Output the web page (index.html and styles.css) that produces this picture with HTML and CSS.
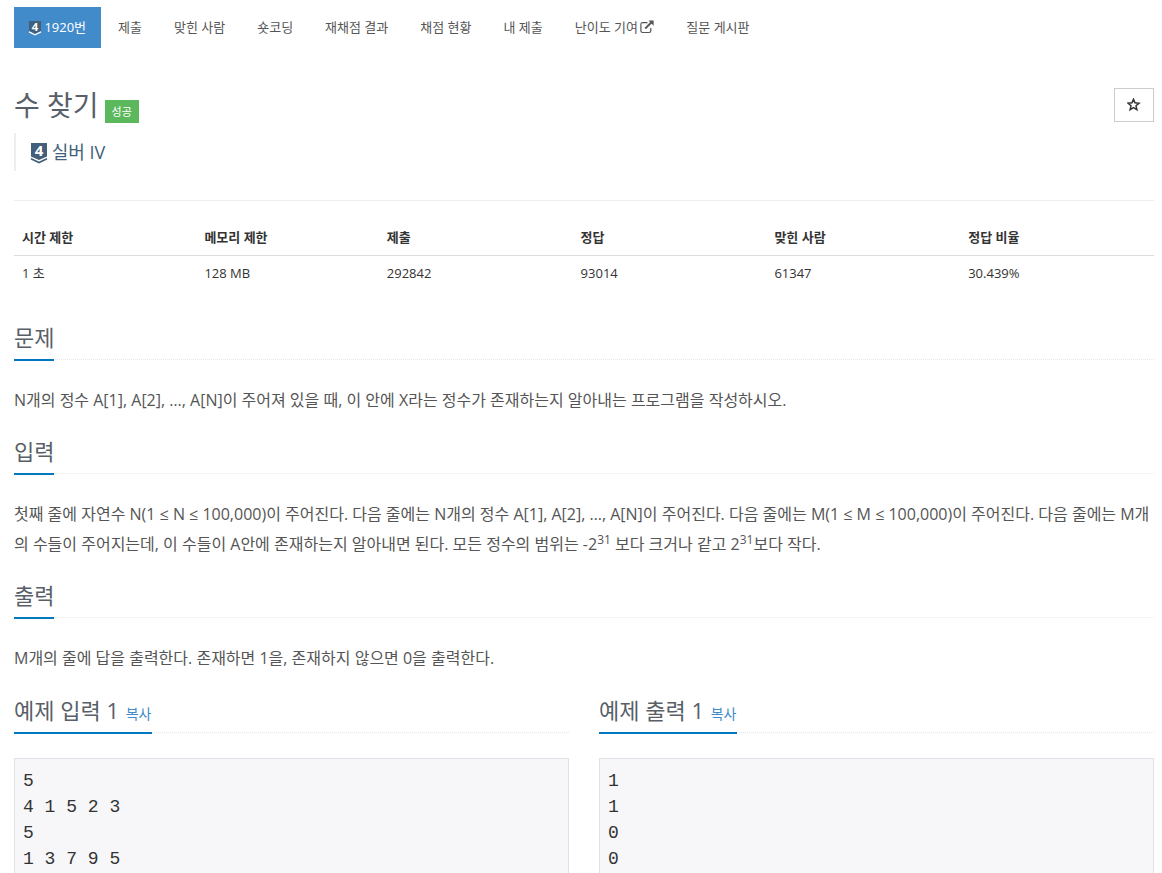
FILE: index.html
```html
<!DOCTYPE html>
<html lang="ko">
<head>
  <meta charset="UTF-8" />
  <meta name="viewport" content="width=device-width, initial-scale=1.0" />
  <title>1920번: 수 찾기</title>
  <link rel="stylesheet" href="styles.css">
</head>
<body>

  <nav>
    <ul class="problem-menu">
      <li class="active">
        <a href="#">
          <svg class="tier tier-small" viewBox="0 0 16 20" aria-hidden="true">
            <path class="tier-body" d="M0 0H16V13L8 17L0 13Z" />
            <path class="tier-line" d="M0 14.5L8 18.5L16 14.5" />
            <text x="8" y="13">4</text>
          </svg>
          1920번
        </a>
      </li>
      <li><a href="#">제출</a></li>
      <li><a href="#">맞힌 사람</a></li>
      <li><a href="#">숏코딩</a></li>
      <li><a href="#">재채점 결과</a></li>
      <li><a href="#">채점 현황</a></li>
      <li><a href="#">내 제출</a></li>
      <li>
        <a href="#">난이도 기여
          <svg class="external" viewBox="0 0 14 14" aria-hidden="true">
            <path d="M7.5 2.7H2.6Q.9 2.7 .9 4.4V10.8Q.9 12.5 2.6 12.5H9.2Q10.8 12.5 10.8 10.8V8" fill="none" stroke="currentColor" stroke-width="1.2" />
            <path d="M5.2 8.6L11.5 2.3" stroke="currentColor" stroke-width="2" />
            <path d="M8.5 .6H13.6V5.7Z" fill="currentColor" />
          </svg></a>
      </li>
      <li><a href="#">질문 게시판</a></li>
    </ul>
  </nav>

  <main>
    <header class="page-header">
      <div>
        <div class="title-row">
          <h1>수 찾기</h1>
          <span class="label">성공</span>
        </div>
        <blockquote>
          <svg class="tier" viewBox="0 0 16 21" aria-hidden="true">
            <path class="tier-body" d="M0 0H16V13.5L8 17L0 13.5Z" />
            <path class="tier-line" d="M0 15.7L8 19.5L16 15.7" />
            <text x="8" y="13">4</text>
          </svg>
          실버 IV
        </blockquote>
      </div>
      <button type="button" class="favorite" aria-label="즐겨찾기">
        <svg viewBox="0 0 14 14" aria-hidden="true">
          <path d="M6.5 1.2L8 4.8L12 5.2L9 7.8L9.9 11.6L6.5 9.6L3.1 11.6L4 7.8L1 5.2L5 4.8Z" />
        </svg>
      </button>
    </header>

    <table>
      <thead>
        <tr>
          <th class="limit">시간 제한</th>
          <th class="limit">메모리 제한</th>
          <th>제출</th>
          <th>정답</th>
          <th>맞힌 사람</th>
          <th>정답 비율</th>
        </tr>
      </thead>
      <tbody>
        <tr>
          <td>1 초</td>
          <td>128 MB</td>
          <td>292842</td>
          <td>93014</td>
          <td>61347</td>
          <td>30.439%</td>
        </tr>
      </tbody>
    </table>

    <section>
      <div class="headline"><h2>문제</h2></div>
      <p>N개의 정수 A[1], A[2], …, A[N]이 주어져 있을 때, 이 안에 X라는 정수가 존재하는지 알아내는 프로그램을 작성하시오.</p>
    </section>

    <section>
      <div class="headline"><h2>입력</h2></div>
      <p>첫째 줄에 자연수 N(1 ≤ N ≤ 100,000)이 주어진다. 다음 줄에는 N개의 정수 A[1], A[2], …, A[N]이 주어진다. 다음 줄에는 M(1 ≤ M ≤ 100,000)이 주어진다. 다음 줄에는 M개의 수들이 주어지는데, 이 수들이 A안에 존재하는지 알아내면 된다. 모든 정수의 범위는 -2<sup>31</sup> 보다 크거나 같고 2<sup>31</sup>보다 작다.</p>
    </section>

    <section>
      <div class="headline"><h2>출력</h2></div>
      <p>M개의 줄에 답을 출력한다. 존재하면 1을, 존재하지 않으면 0을 출력한다.</p>
    </section>

    <div class="samples">
      <section>
        <div class="headline"><h2>예제 입력 1 <button type="button" class="copy">복사</button></h2></div>
        <pre>5
4 1 5 2 3
5
1 3 7 9 5</pre>
      </section>
      <section>
        <div class="headline"><h2>예제 출력 1 <button type="button" class="copy">복사</button></h2></div>
        <pre>1
1
0
0
1</pre>
      </section>
    </div>
  </main>

</body>
</html>
```

FILE: styles.css
```css
* {
  box-sizing: border-box;
}

body {
  margin: 0;
  padding: 7px 8px 20px 14px;
  background: #fff;
  color: #333;
  font-family: "Open Sans", "Noto Sans CJK KR", sans-serif;
  font-size: 13px;
  line-height: 21px;
}

.problem-menu {
  display: flex;
  flex-wrap: wrap;
  gap: 2px;
  margin: 0;
  padding: 0;
  list-style: none;
}

.problem-menu a {
  display: block;
  padding: 10px 15px;
  color: #555;
  text-decoration: none;
}

.problem-menu .active a {
  background: #428bca;
  color: #fff;
}

/* tier badge */
.tier {
  width: 16px;
  height: 21px;
  overflow: visible;
  vertical-align: -5px;
}

.tier-body {
  fill: #435f7a;
}

.tier-line {
  fill: none;
  stroke: #435f7a;
  stroke-width: 1.6;
}

.tier text {
  fill: #fff;
  font-size: 15px;
  font-weight: bold;
  text-anchor: middle;
}

.tier-small {
  width: 12px;
  height: 15px;
  vertical-align: -4px;
}

.tier-small .tier-line {
  stroke: #fff;
}

.external {
  width: 14px;
  height: 14px;
  margin-left: -1px;
  vertical-align: -2px;
}

.page-header {
  display: flex;
  justify-content: space-between;
  align-items: flex-start;
  margin-top: 40px;
  padding-bottom: 29px;
  border-bottom: 1px solid #eee;
}

.title-row {
  display: flex;
  align-items: flex-end;
  gap: 6px;
}

h1 {
  margin: 0;
  color: #585f69;
  font-size: 28px;
  font-weight: normal;
  line-height: 35px;
}

.label {
  padding: 1px 7px;
  background: #5cb85c;
  color: #fff;
  font-size: 11px;
}

blockquote {
  margin: 10px 0 0;
  padding: 5px 15px;
  border-left: 2px solid #eee;
  color: #435f7a;
  font-size: 18px;
  line-height: 28px;
}

.favorite {
  display: flex;
  align-items: center;
  justify-content: center;
  width: 40px;
  height: 34px;
  padding: 0;
  background: #fff;
  border: 1px solid #ccc;
  cursor: pointer;
}

.favorite svg {
  width: 14px;
  height: 14px;
  fill: none;
  stroke: #333;
  stroke-width: 1.5;
}

table {
  width: 100%;
  margin: 19px 0 30px;
  border-collapse: collapse;
  table-layout: fixed;
}

th,
td {
  width: 17%;
  padding: 7px 8px;
  text-align: left;
}

.limit {
  width: 16%;
}

th {
  border-bottom: 1px solid #ddd;
}

.headline {
  display: flex;
  margin-bottom: 25px;
  border-bottom: 1px dotted #e4e9f0;
}

h2 {
  margin: 0 0 -2px;
  padding-bottom: 5px;
  border-bottom: 2px solid #0078c0;
  color: #585f69;
  font-size: 22px;
  font-weight: normal;
  line-height: 33px;
}

p {
  margin: 0 0 20px;
  color: #555;
  font-size: 16px;
  line-height: 30px;
}

sup {
  position: relative;
  top: -6px;
  font-size: 12px;
  line-height: 0;
  vertical-align: baseline;
}

.copy {
  padding: 0 1px;
  background: none;
  border: 0;
  color: #428bca;
  font-family: inherit;
  font-size: 14px;
  line-height: 20px;
  cursor: pointer;
}

.samples {
  display: grid;
  grid-template-columns: 1fr 1fr;
  gap: 30px;
  margin-top: 21px;
}

pre {
  margin: 0;
  padding: 9px 8px;
  background: #f7f7f9;
  border: 1px solid #e1e1e8;
  font-family: "Liberation Mono", "Noto Sans CJK KR", monospace;
  font-size: 18px;
  line-height: 26px;
}

@media (max-width: 768px) {
  .samples {
    grid-template-columns: 1fr;
  }
}
```
